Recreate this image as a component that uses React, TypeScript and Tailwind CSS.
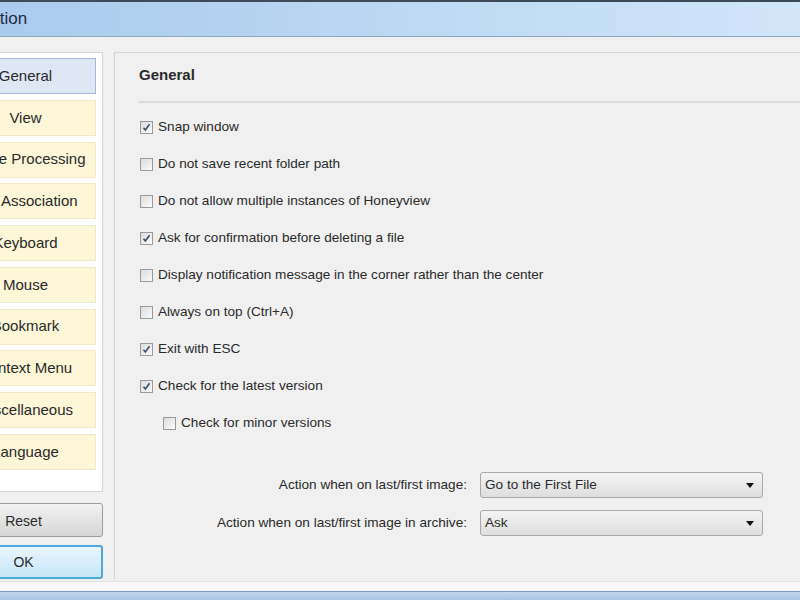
import React from "react";

const menu = [
  "General",
  "View",
  "Image Processing",
  "File Association",
  "Keyboard",
  "Mouse",
  "Bookmark",
  "Context Menu",
  "Miscellaneous",
  "Language",
];

const options = [
  { label: "Snap window", checked: true },
  { label: "Do not save recent folder path", checked: false },
  { label: "Do not allow multiple instances of Honeyview", checked: false },
  { label: "Ask for confirmation before deleting a file", checked: true },
  { label: "Display notification message in the corner rather than the center", checked: false },
  { label: "Always on top (Ctrl+A)", checked: false },
  { label: "Exit with ESC", checked: true },
  { label: "Check for the latest version", checked: true },
];

function CheckBox({ checked }: { checked: boolean }) {
  return (
    <span className="w-[13px] h-[13px] border border-[#9a9a9a] bg-gradient-to-br from-[#dcdcdc] to-[#fbfbfb] flex items-center justify-center shrink-0">
      {checked && (
        <svg width="9" height="9" viewBox="0 0 9 9">
          <path d="M1.5 4.8 L3.4 7 L7.5 1.2" fill="none" stroke="#3b4e6b" strokeWidth="1.6" />
        </svg>
      )}
    </span>
  );
}

function Check({ label, checked, indent }: { label: string; checked: boolean; indent?: boolean }) {
  return (
    <div className={"h-[37px] flex items-center gap-[5px] " + (indent ? "pl-[24px]" : "pl-[1px]")}>
      <CheckBox checked={checked} />
      <span>{label}</span>
    </div>
  );
}

function Select({ label, value }: { label: string; value: string }) {
  return (
    <div className="flex items-center">
      <span className="w-[328px] text-right">{label}</span>
      <div className="ml-[13px] w-[283px] h-[26px] border border-[#a9a9a9] rounded-[3px] bg-gradient-to-b from-[#f4f4f4] to-[#dedede] flex items-center pl-[4px] pr-[8px]">
        <span className="flex-1">{value}</span>
        <svg width="8" height="5" viewBox="0 0 8 5">
          <path d="M0 0 H8 L4 5 Z" fill="#111" />
        </svg>
      </div>
    </div>
  );
}

export default function App() {
  return (
    <div className="w-[800px] h-[600px] overflow-hidden flex flex-col bg-[#f0f0f0] text-[13.6px] text-[#2a2a2a] font-['Liberation_Sans',Arial,sans-serif]">
      <div className="h-[37px] shrink-0 border-t-2 border-t-[#3e4a58] border-b border-b-[#8ea5bf] bg-gradient-to-r from-[#a9cbee] via-[#bcd8f3] to-[#d2e6f9] flex items-center">
        <span className="-ml-[23px] text-[17px] text-[#1c2c45]">Option</span>
      </div>

      <div className="flex-1 flex pt-[15px] pb-[2px]">
        <div className="-ml-[56px] w-[159px] shrink-0 flex flex-col">
          <div className="h-[440px] bg-white border border-[#d6d6d6] pt-[5px] pl-[10px] pr-[6px] flex flex-col gap-[5.75px]">
            {menu.map((m, i) => (
              <div
                key={m}
                className={
                  "h-[36px] shrink-0 flex items-center justify-center text-[15px] whitespace-nowrap border " +
                  (i === 0
                    ? "bg-[#dfe7f5] border-[#a8b9d6]"
                    : "bg-[#fdf7d8] border-[#f1e9c6]")
                }
              >
                {m}
              </div>
            ))}
          </div>
          <div className="mt-[11px] h-[34px] rounded-[3px] border border-[#9c9c9c] bg-gradient-to-b from-[#f2f2f2] to-[#d6d6d6] flex items-center justify-center pt-[2px] text-[14px]">
            Reset
          </div>
          <div className="mt-[8px] h-[34px] rounded-[3px] border-2 border-[#4ea9dc] bg-gradient-to-b from-[#eaf6fd] to-[#c5e6f8] flex items-center justify-center text-[14px]">
            OK
          </div>
        </div>

        <div className="ml-[11px] flex-1 -mr-[20px] border-l border-t border-[#d3d3d3] pl-[24px] flex flex-col">
          <div className="pt-[11px] h-[48px] font-bold text-[15px]">General</div>
          <div className="h-[2px] bg-[#d9d9d9]" />
          <div className="mt-[6px] flex flex-col">
            {options.map((o) => (
              <Check key={o.label} label={o.label} checked={o.checked} />
            ))}
            <Check label="Check for minor versions" checked={false} indent />
          </div>
          <div className="mt-[30px] flex flex-col gap-[12px]">
            <Select label="Action when on last/first image:" value="Go to the First File" />
            <Select label="Action when on last/first image in archive:" value="Ask" />
          </div>
        </div>
      </div>

      <div className="h-[10px] shrink-0 bg-[#f8f8f8] border-t border-[#e2e2e2]" />
      <div className="h-[12px] shrink-0 border-t border-[#7f9bbd] bg-gradient-to-b from-[#c3d8ee] to-[#9fbde0]" />
    </div>
  );
}
